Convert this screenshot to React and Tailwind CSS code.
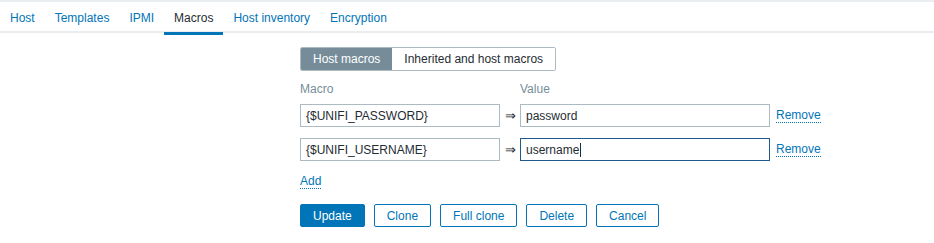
import React from 'react';

const tabs = ['Host', 'Templates', 'IPMI', 'Macros', 'Host inventory', 'Encryption'];

const macros = [
    { name: '{$UNIFI_PASSWORD}', value: 'password', focused: false },
    { name: '{$UNIFI_USERNAME}', value: 'username', focused: true },
];

const App = () => {
    return (
        <div className="w-[934px] h-[243px] bg-white text-[12px] text-[#1f2c33]" style={{ fontFamily: '"Liberation Sans", Arial, sans-serif' }}>
            {/* Tabs */}
            <div className="border-t-2 border-[#ebeef0]">
                <div className="flex h-[31px] border-b-2 border-[#ebeef0]">
                    {tabs.map((t) => (
                        <div
                            key={t}
                            className={
                                'relative flex items-center px-[10px] h-[31px] ' +
                                (t === 'Macros' ? 'text-[#1f2c33]' : 'text-[#0275b8]')
                            }
                        >
                            {t}
                            {t === 'Macros' && (
                                <div className="absolute left-0 right-0 bottom-[-2px] h-[3px] bg-[#0275b8]" />
                            )}
                        </div>
                    ))}
                </div>
            </div>

            {/* Form */}
            <div className="pl-[300px] pt-[14px]">
                <div className="flex h-[24px] w-fit rounded-[2px] border border-[#acbbc2] overflow-hidden">
                    <div className="flex items-center px-[12px] bg-[#768d99] text-white">Host macros</div>
                    <div className="flex items-center px-[12px] bg-white">Inherited and host macros</div>
                </div>

                <div className="flex mt-[10px] text-[#768d99] h-[16px] items-center">
                    <div className="w-[220px]">Macro</div>
                    <div>Value</div>
                </div>

                <div className="flex flex-col gap-[11px] mt-[7px]">
                    {macros.map((m) => (
                        <div key={m.name} className="flex items-center h-[23px]">
                            <div className="flex items-center w-[200px] h-[23px] border border-[#acbbc2] px-[5px]">{m.name}</div>
                            <div className="w-[20px] text-center text-[13px] text-[#1f2c33]">⇒</div>
                            <div
                                className={
                                    'flex items-center w-[250px] h-[23px] border px-[5px] ' +
                                    (m.focused ? 'border-[#1f5a8e]' : 'border-[#acbbc2]')
                                }
                            >
                                {m.value}
                                {m.focused && <span className="inline-block w-[1px] h-[14px] bg-[#1f2c33] ml-[1px]" />}
                            </div>
                            <a className="ml-[6px] text-[#0275b8] border-b border-dotted border-[#0275b8] leading-[13px]">Remove</a>
                        </div>
                    ))}
                </div>

                <div className="mt-[13px] h-[16px] flex items-center">
                    <a className="text-[#0275b8] border-b border-dotted border-[#0275b8] leading-[13px]">Add</a>
                </div>

                <div className="flex gap-[9px] mt-[14px]">
                    <button className="h-[23px] px-[12px] rounded-[2px] bg-[#0275b8] border border-[#0275b8] text-white">Update</button>
                    {['Clone', 'Full clone', 'Delete', 'Cancel'].map((b) => (
                        <button key={b} className="h-[23px] px-[12px] rounded-[2px] bg-white border border-[#0275b8] text-[#0275b8]">{b}</button>
                    ))}
                </div>
            </div>
        </div>
    );
};

export default App;
